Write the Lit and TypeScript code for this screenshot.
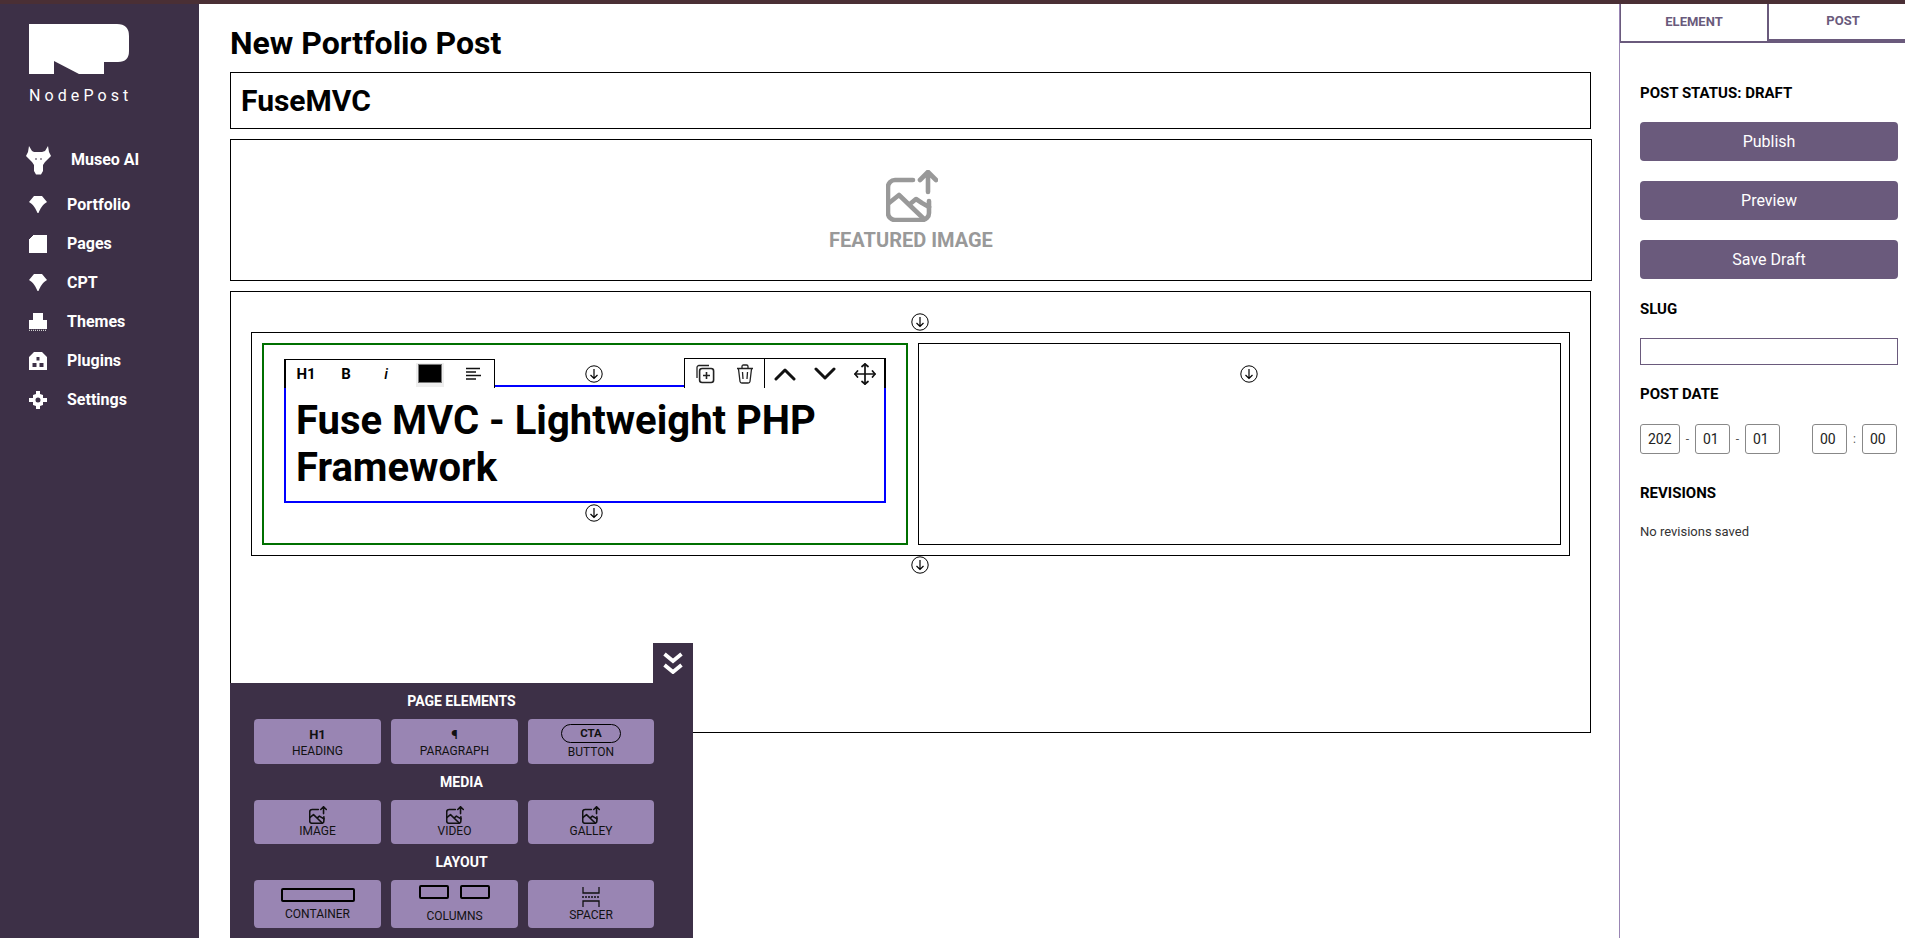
import { LitElement, css, html, svg } from 'lit';
import { customElement } from 'lit/decorators.js';

const gem = svg`<path d="M5 0H13L18 6C14 8 11 13 9.5 17H8.5C7 13 4 8 0 6Z" fill="#fff"/>`;
const navItems = [
  { label: 'Portfolio', icon: gem },
  { label: 'Pages', icon: svg`<path d="M5 0H18V18H0V5Z" fill="#fff" stroke="#fff" stroke-linejoin="round"/>` },
  { label: 'CPT', icon: gem },
  {
    label: 'Themes',
    icon: svg`<path d="M4 0H14V7H18V16H0V7H4Z" fill="#fff"/><path d="M0 17.5H18" stroke="#ccc" stroke-width="1.4" stroke-dasharray="1 1"/>`,
  },
  {
    label: 'Plugins',
    icon: svg`<path fill-rule="evenodd" d="M5 0H13L18 5V18H0V5ZM7.5 5H10.5V8.5H7.5ZM3.5 11H7.5V15H3.5ZM10.5 11H14.5V15H10.5Z" fill="#fff"/>`,
  },
  {
    label: 'Settings',
    icon: svg`<path fill-rule="evenodd" d="M7 0H11V3L14 4V7H18V11H14V14L11 15V18H7V15L4 14V11H0V7H4V4L7 3ZM9 6.5A2.5 2.5 0 1 0 9 11.5A2.5 2.5 0 1 0 9 6.5Z" fill="#fff"/>`,
  },
];

const imageUp = (color: string, size: number) => html`<svg
  width=${size}
  height=${size}
  viewBox="0 0 52 52"
  fill="none"
  stroke=${color}
  stroke-width="4.6"
  stroke-linecap="round"
  stroke-linejoin="round"
>
  <path d="M27 10H9A7 7 0 0 0 2 17V43A7 7 0 0 0 9 50H36A7 7 0 0 0 43 43V31" />
  <path d="M42 22V2M34 10L42 2L50 10" />
  <path d="M3 33L13 25L38 49M24 34L30 29L36 33L43 37" />
</svg>`;

const dropIcon = html`<svg class="drop" width="18" height="18" viewBox="0 0 18 18" fill="none" stroke="#000">
  <circle cx="9" cy="9" r="8.2" />
  <path d="M9 4V13.5M5.5 10L9 13.5L12.5 10" stroke-width="1.2" />
</svg>`;

const chevron = (d: string) => html`<svg width="22" height="14" viewBox="0 0 22 14" fill="none" stroke="#111" stroke-width="3" stroke-linecap="round" stroke-linejoin="round"><path d=${d} /></svg>`;

@customElement('app-root')
export class AppRoot extends LitElement {
  static styles = css`
    :host {
      display: flex;
      flex-direction: column;
      height: 100vh;
      overflow: hidden;
      background: #fff;
      color: #000;
      font-family: Roboto, 'Liberation Sans', sans-serif;
      --c-dark: #3d3047;
      --c-mid: #6a5a7c;
      --c-light: #9985b3;
    }
    * {
      box-sizing: border-box;
    }
    .strip {
      height: 4px;
      flex: none;
      background: #4a2f35;
    }
    .shell {
      flex: 1;
      display: flex;
      min-height: 0;
    }

    .sidebar {
      width: 199px;
      flex: none;
      background: var(--c-dark);
      color: #fff;
      padding: 20px 0 0 29px;
    }
    .logo {
      display: block;
    }
    .brand {
      margin-top: 12px;
      font-size: 16px;
      line-height: 20px;
      letter-spacing: 4.1px;
    }
    .nav {
      margin-top: 30px;
    }
    .nav-item {
      height: 39px;
      display: flex;
      align-items: center;
      gap: 20px;
      font-size: 16px;
      font-weight: 700;
    }
    .nav-item.museo {
      height: 49px;
      margin-left: -3px;
      padding-bottom: 2px;
    }

    .main {
      flex: 1;
      min-width: 0;
      padding: 0 28px 0 31px;
      position: relative;
    }
    h1 {
      margin: 0;
      font-size: 32px;
      line-height: 38px;
      font-weight: 700;
      padding-top: 20px;
      height: 68px;
    }
    .title {
      display: block;
      width: 100%;
      height: 57px;
      border: 1px solid #000;
      border-radius: 0;
      outline: none;
      padding: 0 10px;
      font: 700 30px Roboto, sans-serif;
      color: #000;
    }
    .featured {
      margin-top: 10px;
      margin-right: -1px;
      height: 142px;
      border: 1px solid #000;
      display: flex;
      flex-direction: column;
      align-items: center;
      padding-top: 30px;
      color: #999;
      font-size: 20px;
      font-weight: 700;
    }
    .featured svg {
      margin-left: 2px;
    }
    .featured span {
      margin-top: 6px;
      line-height: 24px;
    }
    .canvas {
      margin-top: 10px;
      height: 442px;
      border: 1px solid #000;
      padding: 21px 20px 0;
      display: flex;
      flex-direction: column;
    }
    .drop {
      display: block;
      flex: none;
      box-sizing: content-box;
      padding-left: 18px;
      margin: 0 auto;
    }
    .row {
      display: flex;
      gap: 10px;
      height: 224px;
      margin-top: 1px;
      border: 1px solid #000;
      padding: 10px 8px 10px 10px;
      flex: none;
    }
    .col {
      flex: 1;
      min-width: 0;
      border: 1px solid #000;
      padding-top: 21px;
    }
    .col.selected {
      flex: none;
      width: 646px;
      border: 2px solid #007000;
      padding: 20px 20px 0;
    }
    .block {
      position: relative;
      margin-top: 2px;
      height: 118px;
      border: 2px solid #00f;
      padding: 10px;
      font-size: 40px;
      line-height: 47px;
      font-weight: 700;
    }
    .tools {
      position: absolute;
      bottom: 100%;
      height: 29px;
      margin-bottom: -1px;
      background: #fff;
      border-top: 1px solid #000;
      display: flex;
      align-items: center;
      font-size: 15px;
      line-height: 1;
    }
    .tools.left {
      left: -2px;
      width: 211px;
      border-left: 2px solid #000;
      border-right: 1px solid #000;
    }
    .tools.right {
      right: -2px;
      width: 202px;
      height: 30px;
      border-left: 1px solid #000;
      border-right: 2px solid #000;
    }
    .tool {
      width: 40px;
      height: 100%;
      flex: none;
      display: flex;
      align-items: center;
      justify-content: center;
    }
    .tool.divided {
      border-right: 1px solid #000;
    }
    .tool.italic {
      font-style: italic;
      font-weight: 500;
    }
    .swatch-wrap {
      width: 48px;
      height: 100%;
      flex: none;
      display: flex;
      justify-content: center;
      padding-top: 3px;
    }
    .swatch-bg {
      width: 28px;
      height: 24px;
      background: #eee;
      display: flex;
      justify-content: center;
      padding-top: 1px;
    }
    .swatch {
      width: 24px;
      height: 19px;
      background: #000;
      border: 1px solid #777;
    }
    .block + .drop {
      margin-top: 1px;
    }

    .palette {
      position: absolute;
      left: 31px;
      top: 679px;
      width: 463px;
      height: 255px;
      background: var(--c-dark);
      padding-top: 8px;
    }
    .palette-toggle {
      position: absolute;
      right: 0;
      top: -40px;
      width: 40px;
      height: 40px;
      background: var(--c-dark);
      display: flex;
      align-items: center;
      justify-content: center;
    }
    .palette-label {
      color: #fff;
      font-size: 14px;
      font-weight: 700;
      line-height: 20px;
      text-align: center;
      margin-bottom: 8px;
    }
    .palette-grid {
      display: grid;
      grid-template-columns: 127px 127px 126px;
      gap: 10px;
      padding-left: 24px;
      margin-bottom: 8px;
    }
    .piece {
      height: 45px;
      background: var(--c-light);
      border-radius: 4px;
      display: flex;
      flex-direction: column;
      align-items: center;
      justify-content: flex-start;
      padding-top: 7px;
      font-size: 12px;
      line-height: 14px;
      color: #111;
    }
    .h44 .piece {
      height: 44px;
      padding-top: 6px;
    }
    .h48 .piece {
      height: 48px;
      padding-top: 5px;
    }
    .piece b {
      font-size: 13px;
      line-height: 18px;
    }
    .pill {
      width: 60px;
      height: 19px;
      margin-top: -2px;
      margin-bottom: 2px;
      border: 1px solid #000;
      border-radius: 10px;
      text-align: center;
      font-size: 11.5px;
      font-weight: 700;
      line-height: 17px;
    }
    .piece svg {
      display: block;
      flex: none;
    }
    .cols-icon {
      display: flex;
      gap: 11px;
      margin-bottom: 10px;
    }
    .box-icon {
      border: 2px solid #000;
      border-radius: 2px;
      height: 14px;
      width: 30px;
    }
    .box-icon.wide {
      width: 74px;
      margin: 3px 0 5px;
    }
    .spacer-icon {
      margin: 2px 0 1px;
    }

    .inspector {
      width: 286px;
      flex: none;
      border-left: 1px solid var(--c-light);
      font-size: 15px;
    }
    .tabs {
      display: flex;
      height: 39px;
      color: var(--c-mid);
      font-size: 13px;
      font-weight: 700;
    }
    .tab {
      flex: 1;
      display: flex;
      align-items: center;
      justify-content: center;
      padding-bottom: 2px;
    }
    .tab.element {
      flex: none;
      width: 149px;
      border-left: 1px solid var(--c-mid);
      border-bottom: 2px solid var(--c-mid);
      border-right: 2px solid var(--c-mid);
    }
    .tab.post {
      border-bottom: 4px solid var(--c-mid);
      padding-left: 12px;
    }
    .panel {
      padding: 41px 7px 0 20px;
    }
    .heading {
      font-size: 15px;
      font-weight: 700;
      line-height: 18px;
    }
    .action {
      display: block;
      width: 100%;
      height: 39px;
      margin-top: 20px;
      border: none;
      border-radius: 4px;
      background: var(--c-mid);
      color: #fff;
      font: 400 16px Roboto, sans-serif;
    }
    .action + .heading {
      margin-top: 21px;
    }
    .slug {
      display: block;
      width: 100%;
      height: 27px;
      margin: 20px 0;
      border: 1px solid var(--c-mid);
      border-radius: 0;
      outline: none;
    }
    .dates {
      display: flex;
      align-items: center;
      margin: 21px 0 30px;
      font-size: 12px;
      color: #555;
    }
    .dates input {
      height: 30px;
      width: 35px;
      border: 1px solid #888;
      border-radius: 3px;
      padding: 0 7px;
      font: 400 14px Roboto, sans-serif;
      color: #222;
      outline: none;
    }
    .dates input.year {
      width: 40px;
    }
    .dates span {
      width: 15px;
      text-align: center;
    }
    .dates .spacer {
      width: 32px;
    }
    .none {
      margin-top: 22px;
      font-size: 13px;
      line-height: 16px;
      color: #333;
    }
  `;

  render() {
    return html`
      <div class="strip"></div>
      <div class="shell">
        ${this.renderSidebar()} ${this.renderMain()} ${this.renderInspector()}
      </div>
    `;
  }

  renderSidebar() {
    return html`<aside class="sidebar">
      <svg class="logo" width="100" height="50" viewBox="0 0 100 50">
        <path d="M0 0H88Q100 0 100 12V27Q100 38 89 38H75V50H50L25 37V50H0Z" fill="#fff" />
      </svg>
      <div class="brand">NodePost</div>
      <nav class="nav">
        <div class="nav-item museo">
          <svg width="25" height="30" viewBox="0 0 25 30">
            <path
              d="M3 1L6 6L8 7H16L19 6L22 1L23 7L25 11L19 17L17 20V26L15 29.5H10L8 26V20L6 17L0 11L2 7Z"
              fill="#fff"
            />
            <path d="M9 14H11M14 14H16" stroke="#3d3047" stroke-width="1.2" />
          </svg>
          <span>Museo AI</span>
        </div>
        ${navItems.map(
          (item) => html`<div class="nav-item">
            <svg width="18" height="18" viewBox="0 0 18 18">${item.icon}</svg>
            <span>${item.label}</span>
          </div>`,
        )}
      </nav>
    </aside>`;
  }

  renderMain() {
    return html`<main class="main">
      <h1>New Portfolio Post</h1>
      <input class="title" .value=${'FuseMVC'} />
      <div class="featured">${imageUp('#999', 52)}<span>FEATURED IMAGE</span></div>
      <div class="canvas">
        ${dropIcon}
        <div class="row">
          <div class="col selected">
            ${dropIcon}
            <div class="block">
              <div class="tools left">
                <div class="tool">H1</div>
                <div class="tool">B</div>
                <div class="tool italic">i</div>
                <div class="swatch-wrap"><div class="swatch-bg"><div class="swatch"></div></div></div>
                <div class="tool">
                  <svg width="16" height="14" viewBox="0 0 16 14" stroke="#111" stroke-width="1.5">
                    <path d="M0 1.5H14M0 5H10M0 8.5H15M0 12H10" />
                  </svg>
                </div>
              </div>
              <div class="tools right">
                <div class="tool">
                  <svg width="20" height="20" viewBox="0 0 20 20" fill="none" stroke="#222" stroke-width="1.3">
                    <path d="M2 14V3.5A2 2 0 0 1 4 1.5H14" />
                    <rect x="4.6" y="4.5" width="14" height="14" rx="2.5" stroke-width="1.6" />
                    <path d="M8 11.5H15M11.5 8V15" stroke-width="1.6" />
                  </svg>
                </div>
                <div class="tool divided">
                  <svg width="18" height="20" viewBox="0 0 18 20" fill="none" stroke="#222" stroke-width="1.3">
                    <path d="M1 4.5H17M6 4V2.5Q6 1 7.5 1H10.5Q12 1 12 2.5V4" />
                    <path d="M2.5 5L4 17.5Q4.2 19 5.8 19H12.2Q13.8 19 14 17.5L15.5 5" />
                    <path d="M6.5 8L7 15M11.5 8L11 15" />
                  </svg>
                </div>
                <div class="tool">${chevron('M2 12L11 3L20 12')}</div>
                <div class="tool">${chevron('M2 2L11 11L20 2')}</div>
                <div class="tool">
                  <svg width="22" height="22" viewBox="0 0 22 22" fill="none" stroke="#111" stroke-width="1.7" stroke-linecap="round" stroke-linejoin="round">
                    <path d="M11 1V21M1 11H21" />
                    <path d="M8 3.5L11 1L14 3.5M8 18.5L11 21L14 18.5M3.5 8L1 11L3.5 14M18.5 8L21 11L18.5 14" />
                  </svg>
                </div>
              </div>
              Fuse MVC - Lightweight PHP Framework
            </div>
            ${dropIcon}
          </div>
          <div class="col">${dropIcon}</div>
        </div>
        ${dropIcon}
      </div>
      ${this.renderPalette()}
    </main>`;
  }

  renderPalette() {
    return html`<section class="palette">
      <div class="palette-toggle">
        <svg width="20" height="22" viewBox="0 0 20 22" fill="none" stroke="#fff" stroke-width="3.8" stroke-linejoin="miter">
          <path d="M1.5 2L10 9L18.5 2M1.5 13L10 20L18.5 13" />
        </svg>
      </div>
      <div class="palette-label">PAGE ELEMENTS</div>
      <div class="palette-grid">
        <div class="piece"><b>H1</b>HEADING</div>
        <div class="piece"><b>¶</b>PARAGRAPH</div>
        <div class="piece"><div class="pill">CTA</div>BUTTON</div>
      </div>
      <div class="palette-label">MEDIA</div>
      <div class="palette-grid h44">
        <div class="piece">${imageUp('#111', 18)}IMAGE</div>
        <div class="piece">${imageUp('#111', 18)}VIDEO</div>
        <div class="piece">${imageUp('#111', 18)}GALLEY</div>
      </div>
      <div class="palette-label">LAYOUT</div>
      <div class="palette-grid h48">
        <div class="piece"><div class="box-icon wide"></div>CONTAINER</div>
        <div class="piece">
          <div class="cols-icon"><div class="box-icon"></div><div class="box-icon"></div></div>
          COLUMNS
        </div>
        <div class="piece">
          <svg class="spacer-icon" width="18" height="20" viewBox="0 0 18 20" fill="none" stroke="#111" stroke-width="1.3">
            <path d="M1 0V6H17V0M1 20V14H17V20" />
            <path d="M0 10H18" stroke-dasharray="2 1" />
          </svg>
          SPACER
        </div>
      </div>
    </section>`;
  }

  renderInspector() {
    return html`<aside class="inspector">
      <div class="tabs">
        <div class="tab element">ELEMENT</div>
        <div class="tab post">POST</div>
      </div>
      <div class="panel">
        <div class="heading">POST STATUS: DRAFT</div>
        <button class="action">Publish</button>
        <button class="action">Preview</button>
        <button class="action">Save Draft</button>
        <div class="heading">SLUG</div>
        <input class="slug" />
        <div class="heading">POST DATE</div>
        <div class="dates">
          <input class="year" .value=${'2023'} />
          <span>-</span>
          <input .value=${'01'} />
          <span>-</span>
          <input .value=${'01'} />
          <span class="spacer"></span>
          <input .value=${'00'} />
          <span>:</span>
          <input .value=${'00'} />
        </div>
        <div class="heading">REVISIONS</div>
        <div class="none">No revisions saved</div>
      </div>
    </aside>`;
  }
}
